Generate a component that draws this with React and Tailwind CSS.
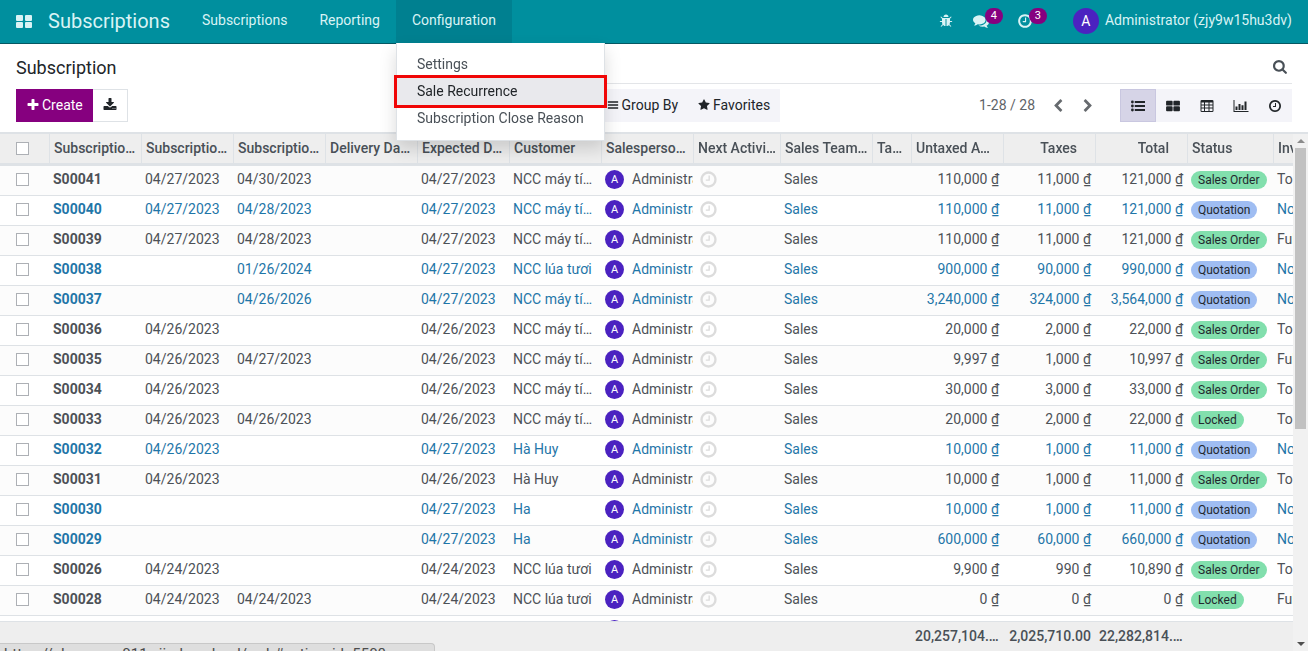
import React, { useState } from 'react';
import clsx from 'clsx';

const PATHS = {
    plus: 'M1600 736v192q0 40-28 68t-68 28h-416v416q0 40-28 68t-68 28h-192q-40 0-68-28t-28-68v-416h-416q-40 0-68-28t-28-68v-192q0-40 28-68t68-28h416v-416q0-40 28-68t68-28h192q40 0 68 28t28 68v416h416q40 0 68 28t28 68z',
    download: 'M1344 1344q0-26-19-45t-45-19-45 19-19 45 19 45 45 19 45-19 19-45zm256 0q0-26-19-45t-45-19-45 19-19 45 19 45 45 19 45-19 19-45zm128-224v320q0 40-28 68t-68 28h-1472q-40 0-68-28t-28-68v-320q0-40 28-68t68-28h465l135 136q58 56 136 56t136-56l136-136h464q40 0 68 28t28 68zm-325-569q17 41-14 70l-448 448q-18 19-45 19t-45-19l-448-448q-31-29-14-70 17-39 59-39h256v-448q0-26 19-45t45-19h256q26 0 45 19t19 45v448h256q42 0 59 39z',
    search: 'M1152 704q0-185-131.5-316.5t-316.5-131.5-316.5 131.5-131.5 316.5 131.5 316.5 316.5 131.5 316.5-131.5 131.5-316.5zm512 832q0 52-38 90t-90 38q-54 0-90-38l-343-342q-179 124-399 124-143 0-273.5-55.5t-225-150-150-225-55.5-273.5 55.5-273.5 150-225 225-150 273.5-55.5 273.5 55.5 225 150 150 225 55.5 273.5q0 220-124 399l343 343q37 37 37 90z',
    clock: 'M1024 544v448q0 14-9 23t-23 9h-320q-14 0-23-9t-9-23v-64q0-14 9-23t23-9h224v-352q0-14 9-23t23-9h64q14 0 23 9t9 23zm416 352q0-148-73-273t-198-198-273-73-273 73-198 198-73 273 73 273 198 198 273 73 273-73 198-198 73-273zm224 0q0 209-103 385.5t-279.5 279.5-385.5 103-385.5-103-279.5-279.5-103-385.5 103-385.5 279.5-279.5 385.5-103 385.5 103 279.5 279.5 103 385.5z',
    star: 'M1728 647q0 22-26 48l-363 354 86 500q1 7 1 20 0 21-10.5 35.5t-30.5 14.5q-19 0-40-12l-449-236-449 236q-22 12-40 12-21 0-31.5-14.5t-10.5-35.5q0-6 2-20l86-500-364-354q-25-27-25-48 0-37 56-46l502-73 225-455q19-41 49-41t49 41l225 455 502 73q56 9 56 46z',
    left: 'M1427 301l-531 531 531 531q19 19 19 45t-19 45l-166 166q-19 19-45 19t-45-19l-742-742q-19-19-19-45t19-45l742-742q19-19 45-19t45 19l166 166q19 19 19 45t-19 45z',
    right: 'M1363 877l-742 742q-19 19-45 19t-45-19l-166-166q-19-19-19-45t19-45l531-531-531-531q-19-19-19-45t19-45l166-166q19-19 45-19t45 19l742 742q19 19 19 45t-19 45z',
    bug: 'M1696 960q0 26-19 45t-45 19h-224q0 171-67 290l208 209q19 19 19 45t-19 45q-18 19-45 19t-45-19l-198-197q-5 5-15 13t-42 28.5-65 36.5-82 29-97 13v-896h-128v896q-51 0-101.5-13.5t-87-33-66-39-43.5-32.5l-15-14-183 207q-20 21-48 21-24 0-43-16-19-18-20.5-44.5t15.5-46.5l202-227q-58-114-58-274h-224q-26 0-45-19t-19-45 19-45 45-19h224v-294l-173-173q-19-19-19-45t19-45 45-19 45 19l173 173h844l173-173q19-19 45-19t45 19 19 45-19 45l-173 173v294h224q26 0 45 19t19 45zm-480-576h-640q0-133 93.5-226.5t226.5-93.5 226.5 93.5 93.5 226.5z',
    comments: 'M1408 768q0 139-94 257t-256.5 186.5-353.5 68.5q-86 0-176-16-124 88-278 128-36 9-86 16h-3q-11 0-20.5-8t-11.5-21q-1-3-1-6.5t.5-6.5 2-6l2.5-5 3.5-5.5 4-5 4.5-5 4-4.5q5-6 23-25t26-29.5 22.5-29 25-38.5 20.5-44q-124-72-195-177t-71-224q0-139 94-257t256.5-186.5 353.5-68.5 353.5 68.5 256.5 186.5 94 257zm384 256q0 120-71 224.5t-195 176.5q10 24 20.5 44t25 38.5 22.5 29 26 29.5 23 25q1 1 4 4.5t4.5 5 4 5 3.5 5.5l2.5 5 2 6 .5 6.5-1 6.5q-3 14-13 22t-22 7q-50-7-86-16-154-40-278-128-90 16-176 16-271 0-472-132 58 4 88 4 161 0 309-45t264-129q125-92 192-212t67-254q0-77-23-152 129 71 204 178t75 230z',
    filter: 'M1595 295q17 41-14 70l-493 493v742q0 42-39 59-13 5-25 5-27 0-45-19l-256-256q-19-19-19-45v-486l-493-493q-31-29-14-70 17-39 59-39h1280q42 0 59 39z',
    bars: 'M128 320h1536v224h-1536zM128 784h1536v224h-1536zM128 1248h1536v224h-1536z',
    list: 'M0 384a180 180 0 1 0 360 0a180 180 0 1 0-360 0zM0 896a180 180 0 1 0 360 0a180 180 0 1 0-360 0zM0 1408a180 180 0 1 0 360 0a180 180 0 1 0-360 0zM480 264h1312v240h-1312zM480 776h1312v240h-1312zM480 1288h1312v240h-1312z',
    kanban: 'M130 220h600q120 0 120 120v384q0 120-120 120h-600q-120 0-120-120v-384q0-120 120-120zM1062 220h600q120 0 120 120v384q0 120-120 120h-600q-120 0-120-120v-384q0-120 120-120zM130 940h600q120 0 120 120v384q0 120-120 120h-600q-120 0-120-120v-384q0-120 120-120zM1062 940h600q120 0 120 120v384q0 120-120 120h-600q-120 0-120-120v-384q0-120 120-120z',
    table: 'M224 128h1344q160 0 160 160v1216q0 160-160 160h-1344q-160 0-160-160v-1216q0-160 160-160zM192 448v256h320v-256zM640 448v256h448v-256zM1216 448v256h384v-256zM192 832v256h320v-256zM640 832v256h448v-256zM1216 832v256h384v-256zM192 1216v320h320v-320zM640 1216v320h448v-320zM1216 1216v320h384v-320z',
    chart: 'M0 128h128v1408h1792v128h-1920zM256 960h256v448h-256zM640 640h256v768h-256zM1024 800h256v608h-256zM1408 320h256v1088h-256z',
};

const Icon = ({ name, className = 'size-3.5' }) => (
    <svg viewBox={name === 'chart' ? '0 0 1920 1792' : '0 0 1792 1792'} className={clsx('shrink-0 fill-current', className)} aria-hidden="true">
        <path d={PATHS[name]} fillRule={name === 'table' ? 'evenodd' : 'nonzero'} />
    </svg>
);

// [number, start, end, expected date, customer, untaxed, taxes, total, status, invoice status]
const ROWS = [
    ['S00041', '04/27/2023', '04/30/2023', '04/27/2023', 'NCC máy tính', '110,000', '11,000', '121,000', 'Sales Order', 'To Invoice'],
    ['S00040', '04/27/2023', '04/28/2023', '04/27/2023', 'NCC máy tính', '110,000', '11,000', '121,000', 'Quotation', 'Nothing to Invoice'],
    ['S00039', '04/27/2023', '04/28/2023', '04/27/2023', 'NCC máy tính', '110,000', '11,000', '121,000', 'Sales Order', 'Fully Invoiced'],
    ['S00038', '', '01/26/2024', '04/27/2023', 'NCC lúa tươi', '900,000', '90,000', '990,000', 'Quotation', 'Nothing to Invoice'],
    ['S00037', '', '04/26/2026', '04/27/2023', 'NCC máy tính', '3,240,000', '324,000', '3,564,000', 'Quotation', 'Nothing to Invoice'],
    ['S00036', '04/26/2023', '', '04/26/2023', 'NCC máy tính', '20,000', '2,000', '22,000', 'Sales Order', 'To Invoice'],
    ['S00035', '04/26/2023', '04/27/2023', '04/26/2023', 'NCC máy tính', '9,997', '1,000', '10,997', 'Sales Order', 'Fully Invoiced'],
    ['S00034', '04/26/2023', '', '04/26/2023', 'NCC máy tính', '30,000', '3,000', '33,000', 'Sales Order', 'To Invoice'],
    ['S00033', '04/26/2023', '04/26/2023', '04/26/2023', 'NCC máy tính', '20,000', '2,000', '22,000', 'Locked', 'To Invoice'],
    ['S00032', '04/26/2023', '', '04/27/2023', 'Hà Huy', '10,000', '1,000', '11,000', 'Quotation', 'Nothing to Invoice'],
    ['S00031', '04/26/2023', '', '04/26/2023', 'Hà Huy', '10,000', '1,000', '11,000', 'Sales Order', 'To Invoice'],
    ['S00030', '', '', '04/27/2023', 'Ha', '10,000', '1,000', '11,000', 'Quotation', 'Nothing to Invoice'],
    ['S00029', '', '', '04/27/2023', 'Ha', '600,000', '60,000', '660,000', 'Quotation', 'Nothing to Invoice'],
    ['S00026', '04/24/2023', '', '04/24/2023', 'NCC lúa tươi', '9,900', '990', '10,890', 'Sales Order', 'To Invoice'],
    ['S00028', '04/24/2023', '04/24/2023', '04/24/2023', 'NCC lúa tươi', '0', '0', '0', 'Locked', 'Fully Invoiced'],
    ['S00027', '04/24/2023', '', '04/24/2023', 'NCC lúa tươi', '0', '0', '0', 'Sales Order', 'To Invoice'],
];

const COLUMNS = [
    { label: 'Subscription Number', className: 'w-[92px] pr-1' },
    { label: 'Subscription Start', className: 'w-[92px] pr-1' },
    { label: 'Subscription End', className: 'w-[92px] pr-1' },
    { label: 'Delivery Date', className: 'w-[92px] pr-1.5' },
    { label: 'Expected Date', className: 'w-[92px] pr-1' },
    { label: 'Customer', className: 'w-[92px] pr-1' },
    { label: 'Salesperson Name', className: 'w-[92px] pr-1' },
    { label: 'Next Activity', className: 'w-[87px] pr-1' },
    { label: 'Sales Team Name', className: 'w-[92px] pr-1' },
    { label: 'Tags', className: 'w-[39px] pr-1' },
    { label: 'Untaxed Amount', className: 'w-[92px] pr-1' },
    { label: 'Taxes', className: 'w-[92px] pr-[18px] text-right' },
    { label: 'Total', className: 'w-[92px] pr-[18px] text-right' },
    { label: 'Status', className: 'w-[86px] pr-1' },
    { label: 'Invoice Status', className: 'w-[92px] pr-1' },
];

const VIEWS = [
    ['list', 'List'],
    ['kanban', 'Kanban'],
    ['table', 'Pivot'],
    ['chart', 'Graph'],
    ['clock', 'Activity'],
];

const Checkbox = ({ label }) => (
    <input
        type="checkbox"
        aria-label={label}
        className="block size-[13px] appearance-none border border-[#adb0b5] bg-white checked:bg-[#008f9e]"
    />
);

const Badge = ({ children }) => (
    <span className="absolute -top-[5px] left-3 flex h-4 min-w-[18px] items-center justify-center rounded-full bg-[#86007f] px-1 text-[11px] leading-4 text-white">
        {children}
    </span>
);

const Navbar = () => (
    <header className="flex h-11 shrink-0 items-stretch border-b border-[#055863] bg-[#008f9e] text-sm text-[#d9f3f5]">
        <button aria-label="Apps" className="px-4">
            <svg viewBox="0 0 16 13" className="h-[13px] w-4 fill-current" aria-hidden="true">
                <rect width="7" height="6" rx="1" />
                <rect x="9" width="7" height="6" rx="1" />
                <rect y="7" width="7" height="6" rx="1" />
                <rect x="9" y="7" width="7" height="6" rx="1" />
            </svg>
        </button>
        <a href="#home" className="flex items-center pb-0.5 pr-4 text-xl">Subscriptions</a>
        <nav className="flex items-stretch leading-10">
            <button className="flex px-4">Subscriptions</button>
            <button className="flex px-4">Reporting</button>
            <div className="relative flex">
                <button aria-expanded="true" className="flex bg-[#008090] px-4">Configuration</button>
                {/* Configuration menu */}
                <ul className="absolute left-0 top-full z-30 w-[209px] border-x border-b border-[#dee2e6] bg-white py-2 leading-[21px] text-[#495057] shadow-[0_8px_16px_rgba(0,0,0,0.15)]">
                    <li><a href="#settings" className="block px-5 py-[3px]">Settings</a></li>
                    <li>
                        <a href="#recurrence" className="block bg-[#e9e9ed] px-5 py-[3px] text-[#212529] outline-3 outline-[#f00606]">
                            Sale Recurrence
                        </a>
                    </li>
                    <li><a href="#close-reason" className="block px-5 py-[3px]">Subscription Close Reason</a></li>
                </ul>
            </div>
        </nav>
        <div className="ml-auto flex items-center pb-0.5 pr-4">
            <button aria-label="Debug" className="mr-5"><Icon name="bug" /></button>
            <button aria-label="Messages" className="relative mr-7">
                <Icon name="comments" className="size-4" />
                <Badge>4</Badge>
            </button>
            <button aria-label="Activities" className="relative mr-10">
                <Icon name="clock" className="size-4" />
                <Badge>3</Badge>
            </button>
            <button className="flex items-center gap-1.5">
                <span className="flex size-[26px] items-center justify-center rounded-full bg-[#4b22c0] text-white">A</span>
                <span className="pb-0.5">Administrator (zjy9w15hu3dv)</span>
            </button>
        </div>
    </header>
);

const ControlPanel = () => {
    const [view, setView] = useState('list');

    return (
        <div className="flex h-[88px] shrink-0 px-4 text-sm text-[#212529]">
            <div className="w-[507px] shrink-0">
                <h1 className="flex h-[45px] items-center pt-0.5 text-lg">Subscription</h1>
                <div className="flex h-[33px]">
                    <button className="flex items-center gap-0.5 bg-[#86007f] px-2.5 pb-0.5 text-white">
                        <Icon name="plus" />Create
                    </button>
                    <button aria-label="Export" className="flex w-[35px] items-center justify-center border border-l-0 border-[#dee2e6] pb-0.5">
                        <Icon name="download" />
                    </button>
                </div>
            </div>
            <div className="min-w-0 flex-1">
                <label className="flex h-10 items-center border-b border-[#e3e5e8] pt-2">
                    <input type="search" aria-label="Search" className="min-w-0 flex-1 outline-none" />
                    <Icon name="search" className="mr-1 size-[15px] text-[#495057]" />
                </label>
                <div className="mt-[5px] flex h-[33px] items-center">
                    <div className="flex h-full bg-[#f4f4f9] pb-0.5">
                        <button className="flex items-center gap-[3px] px-2.5"><Icon name="filter" className="size-3" />Filters</button>
                        <button className="flex items-center gap-[3px] px-2.5"><Icon name="bars" className="size-3" />Group By</button>
                        <button className="flex items-center gap-[3px] px-2.5"><Icon name="star" className="size-3" />Favorites</button>
                    </div>
                    <span className="ml-auto pb-0.5 text-[#5f6468]">1-28 / 28</span>
                    <button aria-label="Previous" className="ml-4 text-[#666a6e]"><Icon name="left" /></button>
                    <button aria-label="Next" className="ml-4 mr-[25px] text-[#666a6e]"><Icon name="right" /></button>
                    <div className="flex h-full bg-[#f4f4f9]">
                        {VIEWS.map(([icon, label]) => (
                            <button
                                key={icon}
                                aria-label={label}
                                onClick={() => setView(icon)}
                                className={clsx('flex items-center justify-center', view === icon ? 'w-9 border border-[#c9c7e0] bg-[#d6d4e7]' : 'w-[34px]')}
                            >
                                <Icon name={icon} className={icon === 'chart' ? 'h-3.5 w-4' : 'size-3.5'} />
                            </button>
                        ))}
                    </div>
                </div>
            </div>
        </div>
    );
};

const Row = ({ row, striped }) => {
    const [number, start, end, expected, customer, untaxed, taxes, total, status, invoice] = row;
    const quotation = status === 'Quotation';

    return (
        <tr
            className={clsx(
                'h-[30px] *:truncate *:border-b *:border-[#dee2e6] *:px-1 *:pb-0.5',
                striped ? 'bg-[#fcfcfc]' : 'bg-white',
                quotation ? 'text-[#1f76a8]' : 'text-[#4c5157]'
            )}
        >
            <td><div className="pl-3"><Checkbox label={`Select ${number}`} /></div></td>
            <td className="font-bold">{number}</td>
            <td>{start}</td>
            <td>{end}</td>
            <td></td>
            <td>{expected}</td>
            <td>{customer}</td>
            <td>
                <div className="-mr-1 flex items-center gap-2 overflow-hidden">
                    <span className="flex size-[19px] shrink-0 items-center justify-center rounded-full bg-[#4b22c0] text-[11px] text-white">A</span>
                    Administrator
                </div>
            </td>
            <td><Icon name="clock" className="ml-0.5 size-[19px] text-[#dcdcdc]" /></td>
            <td>Sales</td>
            <td></td>
            <td className="text-right">{untaxed} ₫</td>
            <td className="text-right">{taxes} ₫</td>
            <td className="text-right">{total} ₫</td>
            <td>
                <span className={clsx('block w-fit rounded-full px-[7px] text-xs leading-[18px] text-[#22282e]', quotation ? 'bg-[#9fbdf2]' : 'bg-[#82dfad]')}>
                    {status}
                </span>
            </td>
            <td>{invoice}</td>
        </tr>
    );
};

const SubscriptionTable = () => (
    <div className="min-w-0 flex-1 overflow-hidden">
        <table className="w-[1365px] table-fixed border-separate border-spacing-0 text-sm leading-[21px]">
            <thead className="sticky top-0 z-10 bg-[#eeeeee] text-[#495057]">
                <tr className="h-[34px] *:border-b-3 *:border-t-2 *:border-[#dee2e6]">
                    <th className="w-[49px] px-4"><Checkbox label="Select all" /></th>
                    {COLUMNS.map(({ label, className }) => (
                        <th key={label} className={clsx('truncate border-l pl-1 text-left font-medium', className)}>
                            {label}
                        </th>
                    ))}
                </tr>
            </thead>
            <tbody>
                {ROWS.map((row, i) => <Row key={row[0]} row={row} striped={i % 2 === 0} />)}
            </tbody>
            <tfoot className="sticky bottom-0 z-10 bg-[#eeeeee] font-medium text-[#495057]">
                <tr className="h-[30px] *:truncate *:border-t *:border-[#dee2e6] *:px-1">
                    <td colSpan={11}></td>
                    <td className="text-right">20,257,104.00</td>
                    <td className="text-right">2,025,710.00</td>
                    <td className="text-right">22,282,814.00</td>
                    <td colSpan={2}></td>
                </tr>
            </tfoot>
        </table>
    </div>
);

const Scrollbar = () => (
    <div className="flex w-[15px] shrink-0 flex-col items-center border-t-2 border-[#dee2e6] bg-[#f1f1f1]">
        <svg viewBox="0 0 14 14" className="size-3.5 fill-[#8b8b8b]" aria-hidden="true"><path d="M3 9h8L7 5z" /></svg>
        <div className="h-[281px] w-[11px] bg-[#c1c1c1]" />
        <svg viewBox="0 0 14 14" className="mt-auto size-3.5 fill-[#505050]" aria-hidden="true"><path d="M3 5h8L7 9z" /></svg>
    </div>
);

const App = () => (
    <div className="relative flex h-screen flex-col overflow-hidden bg-white font-[Roboto,sans-serif]">
        <Navbar />
        <ControlPanel />
        <main className="flex min-h-0 flex-1">
            <SubscriptionTable />
            <Scrollbar />
        </main>
        {/* Link address preview */}
        <div className="absolute bottom-0 left-0 z-20 h-2 w-[435px] overflow-hidden rounded-tr border-r border-t border-[#c8c8c8] bg-[#dedede] pl-1 text-[15px] leading-5 text-[#4c4c4c]">
            https://playgroup.011.viindoo.cloud/web#action_id=5508
        </div>
    </div>
);

export default App;
